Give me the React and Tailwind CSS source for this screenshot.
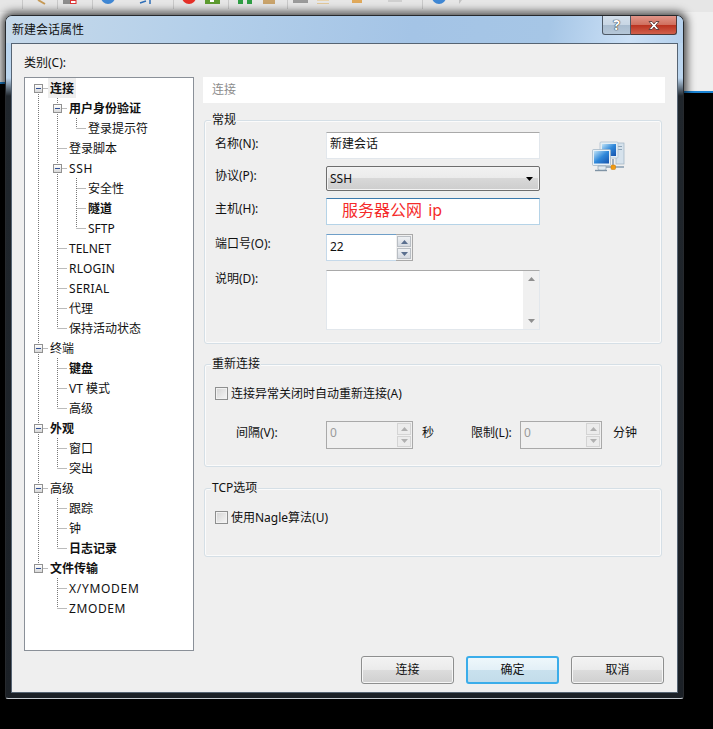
const FONT = "font-['Noto_Sans','Noto_Sans_CJK_SC',sans-serif]"

const TREE = [
  { label: '连接', level: 0, bold: true, exp: true, sel: true },
  { label: '用户身份验证', level: 1, bold: true, exp: true },
  { label: '登录提示符', level: 2 },
  { label: '登录脚本', level: 1 },
  { label: 'SSH', level: 1, exp: true, track: 'tracking-[0.6px]' },
  { label: '安全性', level: 2 },
  { label: '隧道', level: 2, bold: true },
  { label: 'SFTP', level: 2 },
  { label: 'TELNET', level: 1 },
  { label: 'RLOGIN', level: 1, track: 'tracking-[0.2px]' },
  { label: 'SERIAL', level: 1, track: 'tracking-[0.3px]' },
  { label: '代理', level: 1 },
  { label: '保持活动状态', level: 1 },
  { label: '终端', level: 0, exp: true },
  { label: '键盘', level: 1, bold: true },
  { label: 'VT 模式', level: 1 },
  { label: '高级', level: 1 },
  { label: '外观', level: 0, bold: true, exp: true },
  { label: '窗口', level: 1 },
  { label: '突出', level: 1 },
  { label: '高级', level: 0, exp: true },
  { label: '跟踪', level: 1 },
  { label: '钟', level: 1 },
  { label: '日志记录', level: 1, bold: true },
  { label: '文件传输', level: 0, bold: true, exp: true },
  { label: 'X/YMODEM', level: 1, track: 'tracking-[0.7px]' },
  { label: 'ZMODEM', level: 1, track: 'tracking-[0.6px]' },
]

const COL = [13.5, 32.5, 51.5]

// does column k carry on below row i?
function continues(i, k) {
  for (let j = i + 1; j < TREE.length; j++) {
    if (TREE[j].level < k) return false
    if (TREE[j].level === k) return true
  }
  return false
}

function TreeRow({ row, i }) {
  const lines = []
  for (let k = 0; k < row.level; k++) {
    if (continues(i, k)) lines.push(`M${COL[k]} 0V20`)
  }
  const x = COL[row.level]
  if (i > 0) lines.push(`M${x} 0V10`)
  if (continues(i, row.level)) lines.push(`M${x} 10V20`)
  lines.push(`M${x} 10.5H${x + 10}`)
  const pad = ['pl-[25px]', 'pl-[44px]', 'pl-[63px]'][row.level]
  const boxLeft = ['left-[9px]', 'left-[28px]', 'left-[47px]'][row.level]

  return (
    <div className={`relative h-5 flex items-start ${pad}`}>
      <svg className="absolute left-0 top-0" width="80" height="20">
        <path d={lines.join('')} stroke="#777" strokeWidth="1" strokeDasharray="1 1" fill="none" />
      </svg>
      {row.exp && (
        <span className={`absolute top-[6px] ${boxLeft} w-[9px] h-[9px] border border-[#919191] bg-gradient-to-b from-white to-[#d8d8d8] flex items-center justify-center`}>
          <span className="w-[5px] h-px bg-[#2f4f94]" />
        </span>
      )}
      <span className={`relative pt-px text-[12px] leading-[19px] text-[#111] whitespace-nowrap ${row.track || ''} ${row.bold ? 'font-bold' : ''} ${row.sel ? 'bg-[#eeeeee] -ml-[2px] px-[2px]' : ''}`}>
        {row.label}
      </span>
    </div>
  )
}

function Arrow({ up, color = '#5a6f8f' }) {
  return (
    <svg width="7" height="4" viewBox="0 0 7 4">
      <path d={up ? 'M3.5 0L7 4H0Z' : 'M0 0H7L3.5 4Z'} fill={color} />
    </svg>
  )
}

function Spin({ disabled }) {
  const btn = disabled
    ? 'flex-1 flex items-center justify-center border border-[#d4d4d4] bg-[#ececec]'
    : 'flex-1 flex items-center justify-center border border-[#b9bec4] bg-gradient-to-b from-[#eef0f3] to-[#d5dae1]'
  const c = disabled ? '#b0b0b0' : '#5a6f8f'
  return (
    <div className="w-[17px] h-full flex flex-col gap-px p-px border border-[#a9a9a9] border-l-0 bg-[#f0f0f0]">
      <div className={btn}><Arrow up color={c} /></div>
      <div className={btn}><Arrow color={c} /></div>
    </div>
  )
}

function Label({ children, className = '' }) {
  return <div className={`text-[12px] leading-4 text-[#111] whitespace-nowrap ${className}`}>{children}</div>
}

function Group({ title, className = '', children }) {
  return (
    <div className={`relative ml-px w-[458px] rounded-[3px] border border-[#d5dfe6] shadow-[inset_0_0_0_1px_#fbfbfb] ${className}`}>
      <span className="absolute -top-[9px] left-[6px] px-px text-[12px] leading-4 text-[#111] bg-[#efefef]">{title}</span>
      {children}
    </div>
  )
}

function Check({ label }) {
  return (
    <div className="flex items-center gap-[3px] h-4">
      <span className="w-[13px] h-[13px] border border-[#8e8f8f] bg-gradient-to-br from-[#d4d4d4] to-[#f6f6f6] shadow-[inset_0_0_0_1px_#f2f2f2]" />
      <div className="pt-[2px] text-[12px] leading-[14px] text-[#111] whitespace-nowrap">{label}</div>
    </div>
  )
}

function DisabledNum({ width }) {
  return (
    <div className={`flex h-7 ${width}`}>
      <div className="flex-1 border border-r-0 border-[#a9a9a9] bg-[#f0f0f0] pl-[3px] text-[12px] leading-[22px] text-[#9a9a9a]">0</div>
      <Spin disabled />
    </div>
  )
}

function Button({ children, primary }) {
  return (
    <button
      className={`w-[93px] h-[28px] rounded-[3px] text-[12px] text-[#111] ${
        primary
          ? 'border-2 border-[#3badea] bg-[linear-gradient(180deg,#eef7fb_0%,#e3f0f7_48%,#c9e1ee_50%,#c3dcea_100%)]'
          : 'border border-[#8e8f8f] shadow-[inset_0_0_0_1px_#f6f6f6] bg-[linear-gradient(180deg,#f3f3f3_0%,#ebebeb_48%,#dcdcdc_50%,#cfcfcf_100%)]'
      }`}
    >
      {children}
    </button>
  )
}

function NetworkIcon() {
  return (
    <svg width="33" height="33" viewBox="0 0 33 33">
      <defs>
        <linearGradient id="scr" x1="0" y1="0" x2="1" y2="1">
          <stop offset="0" stopColor="#bfe3f7" />
          <stop offset="0.5" stopColor="#2f88da" />
          <stop offset="1" stopColor="#1653ac" />
        </linearGradient>
      </defs>
      <rect x="24" y="2" width="8" height="21" fill="#d6e2ec" stroke="#9fb3c4" strokeWidth="0.7" />
      <rect x="26" y="5" width="4" height="1" fill="#8ea5b8" />
      <rect x="26" y="8" width="4" height="1" fill="#8ea5b8" />
      <rect x="8" y="1" width="18" height="16" rx="1" fill="#e4eef5" stroke="#a9bccb" strokeWidth="0.7" />
      <rect x="10" y="3" width="14" height="12" fill="url(#scr)" />
      <path d="M21 18V27" stroke="#8b9bab" strokeWidth="1.5" />
      <rect x="10" y="25" width="22" height="2" fill="#9fb0bf" />
      <rect x="0.5" y="8.5" width="18" height="16" rx="1" fill="#e8f1f7" stroke="#9cb0c1" strokeWidth="0.7" />
      <rect x="2" y="10" width="15" height="12.5" fill="url(#scr)" />
      <path d="M6 25h8v3c0 2-8 2-8 0z" fill="#dfe8ef" stroke="#8fa3b4" strokeWidth="0.7" />
      <path d="M3 29.5h12" stroke="#7f93a5" strokeWidth="1.4" />
      <rect x="19" y="24" width="4.5" height="4.5" rx="1" fill="#f29b12" stroke="#c97a08" strokeWidth="0.5" />
    </svg>
  )
}

function CloseGlyph() {
  return (
    <svg width="14" height="11" viewBox="0 0 14 11">
      <path d="M2 1.5H5L7 4L9 1.5H12L8.6 5.5L12 9.5H9L7 7L5 9.5H2L5.4 5.5Z" fill="#fff" stroke="#4a3030" strokeWidth="0.8" />
    </svg>
  )
}

function ToolbarBits() {
  return (
    <svg width="713" height="12" className="block">
      <g stroke="#c9c9c9">
        <path d="M22.5 0V9M57.5 0V9M92.5 0V9M173.5 0V9M228.5 0V9M287.5 0V9M422.5 0V9" />
      </g>
      <path d="M38 0L45 4" stroke="#c79a55" strokeWidth="2" />
      <rect x="63" y="0" width="7" height="4" fill="#8c8c8c" />
      <rect x="70.5" y="0.5" width="5.5" height="3" fill="#fff" stroke="#d33" />
      <circle cx="108" cy="-3" r="7" fill="#3f87d4" />
      <path d="M140 3l6-2M150 0v4" stroke="#2f6fb8" strokeWidth="1.5" />
      <circle cx="189" cy="-3" r="7" fill="#e53028" />
      <rect x="205" y="0" width="15" height="4" fill="#5d9b2f" />
      <rect x="210" y="0" width="4" height="2" fill="#fff" />
      <rect x="238" y="0" width="5" height="4" fill="#2f9e44" />
      <rect x="247" y="0" width="5" height="4" fill="#2f9e44" />
      <rect x="263" y="0" width="12" height="4" fill="#c9a36b" />
      <rect x="293" y="0" width="15" height="3" fill="#9a9a9a" />
      <rect x="317" y="0" width="12" height="1" fill="#e9d4ae" />
      <rect x="317" y="3" width="12" height="1" fill="#e2c89a" />
      <rect x="352" y="0" width="10" height="3" fill="#e0a95b" />
      <rect x="388" y="0" width="14" height="2" fill="#cfcfcf" />
      <circle cx="439" cy="-3" r="7" fill="#3f87d4" />
      <path d="M459 0v4l3-4z" fill="#c4c4c4" />
    </svg>
  )
}

export default function App() {
  return (
    <div className={`relative w-[713px] h-[729px] overflow-hidden bg-black ${FONT}`}>
      {/* whatever sits behind the dialog */}
      <div className="h-[93px] bg-[#efefef] border-b-2 border-[#1c84d4]">
        <div className="h-3 bg-[#e6e6e6]">
          <ToolbarBits />
        </div>
      </div>
      <div className="absolute left-0 top-[82px] w-[5px] h-[11px] bg-black border-t-2 border-[#1c84d4]" />

      {/* dialog */}
      <div className="absolute left-[5px] top-[15px] w-[679px] h-[684px] flex flex-col rounded-t-[7px] rounded-b-[3px] border border-[#26292d] border-b-[#c4c9cf] shadow-[0_0_9px_3px_rgba(0,0,0,0.7)] bg-[linear-gradient(180deg,#b9d4ee_0px,#bcd6ef_62px,#20262c_80px,#1b2026_100%)] px-[5px] pb-[5px]">
        <div className="-mx-[5px] h-[27px] shrink-0 flex items-start rounded-t-[6px] pl-[6px] pr-[6px] bg-[linear-gradient(100deg,#c6d9ea_0%,#b3cfea_30%,#a4c4e6_60%,#a6c6e6_80%,#cbe0f6_92%,#b4d0ec_100%)]">
          <span className="mt-[6px] text-[12px] leading-4 text-[#111]">新建会话属性</span>
          <div className="ml-auto flex h-[19px]">
            <div className="w-[29px] flex items-center justify-center rounded-bl-[3px] border border-t-0 border-[#4d5966] bg-[linear-gradient(180deg,#d3dfeb_0%,#c8d6e4_50%,#a9bccf_52%,#b6c7d8_100%)] text-[14px] font-bold leading-none text-white [text-shadow:0_0_1px_#111,0_0_1px_#111]">?</div>
            <div className="w-[46px] flex items-center justify-center rounded-br-[3px] border border-t-0 border-l-0 border-[#4d3a3a] bg-[linear-gradient(180deg,#e2968a_0%,#d0705f_48%,#bb3320_52%,#d0604c_100%)]">
              <CloseGlyph />
            </div>
          </div>
        </div>

        <div className="flex-1 min-h-0 flex flex-col border border-[#566473] bg-[#efefef] pl-[12px] pr-[12px] pt-[11px]">
          <Label className="h-4 mb-[6px]">类别(C):</Label>
          <div className="flex gap-[9px] flex-1 min-h-0">
            <div className="w-[170px] h-[574px] border border-[#8a9098] bg-white overflow-hidden">
              {TREE.map((row, i) => (
                <TreeRow key={i} row={row} i={i} />
              ))}
            </div>

            <div className="w-[462px] flex flex-col">
              <div className="h-[26px] shrink-0 bg-white pl-[9px] text-[12px] leading-[26px] text-[#8c8c8c]">连接</div>

              <Group title="常规" className="mt-[17px] h-[224px] flex pl-[10px] pt-[11px]">
                <div className="w-[325px]">
                  <div className="flex items-start">
                    <Label className="w-[111px] pt-[4px]">名称(N):</Label>
                    <div className="w-[214px] h-[27px] border border-[#e2e7ec] border-t-[#a9a9a9] bg-white pl-[3px] text-[12px] leading-[22px] text-[#111]">新建会话</div>
                  </div>
                  <div className="flex items-start mt-[7px]">
                    <Label className="w-[111px] pt-[2px]">协议(P):</Label>
                    <div className="w-[214px] h-[25px] flex items-center justify-between rounded-[2px] border border-[#6e6e6e] pl-[3px] pr-[6px] shadow-[inset_0_0_0_1px_#f4f4f4] bg-[linear-gradient(180deg,#f2f2f2_0%,#ebebeb_48%,#d8d8d8_50%,#cdcdcd_100%)] text-[12px] text-[#111]">
                      <span>SSH</span>
                      <Arrow color="#000" />
                    </div>
                  </div>
                  <div className="flex items-start mt-[7px]">
                    <Label className="w-[111px] pt-[3px]">主机(H):</Label>
                    <div className="w-[214px] h-[27px] border border-[#b5d3e7] border-t-[#3d7bad] bg-white pl-[15px] text-[16px] leading-[23px] text-[#f52a2a]">服务器公网<span className="ml-[2px]"> ip</span></div>
                  </div>
                  <div className="flex items-start mt-[9px]">
                    <Label className="w-[111px] pt-[2px]">端口号(O):</Label>
                    <div className="flex w-[87px] h-[27px]">
                      <div className="flex-1 border border-r-0 border-[#c5d9ea] border-t-[#6f9fc8] bg-white pl-[3px] text-[12px] leading-[23px] text-[#111]">22</div>
                      <Spin />
                    </div>
                  </div>
                  <div className="flex items-start mt-[9px]">
                    <Label className="w-[111px] pt-px">说明(D):</Label>
                    <div className="w-[214px] h-[60px] flex justify-end border border-[#e2e7ec] border-t-[#a9a9a9] bg-white">
                      <div className="w-4 flex flex-col items-center justify-between bg-[#f0f0f0] py-[6px]">
                        <Arrow up color="#8f8f8f" />
                        <Arrow color="#8f8f8f" />
                      </div>
                    </div>
                  </div>
                </div>
                <div className="ml-[52px] mt-[9px]">
                  <NetworkIcon />
                </div>
              </Group>

              <Group title="重新连接" className="mt-[20px] h-[103px] pl-[10px] pt-[20px]">
                <Check label="连接异常关闭时自动重新连接(A)" />
                <div className="flex items-center mt-[20px] pl-[21px]">
                  <Label className="w-[90px] pb-[4px]">间隔(V):</Label>
                  <DisabledNum width="w-[87px]" />
                  <Label className="ml-[9px] w-[49px] pb-[4px]">秒</Label>
                  <Label className="w-[49px] pb-[4px]">限制(L):</Label>
                  <DisabledNum width="w-[82px]" />
                  <Label className="ml-[11px] pb-[4px]">分钟</Label>
                </div>
              </Group>

              <Group title="TCP选项" className="mt-[21px] h-[69px] pl-[10px] pt-[20px]">
                <Check label="使用Nagle算法(U)" />
              </Group>

              <div className="flex justify-end gap-[12px] mt-[99px] pr-px">
                <Button>连接</Button>
                <Button primary>确定</Button>
                <Button>取消</Button>
              </div>
            </div>
          </div>
        </div>
      </div>
    </div>
  )
}
